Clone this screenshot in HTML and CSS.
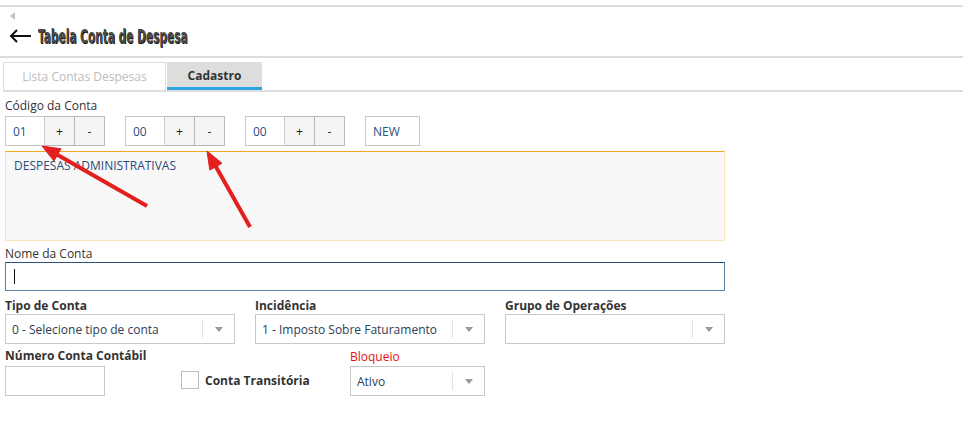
FILE: index.html
```html
<!DOCTYPE html>
<html lang="pt">
<head>
<meta charset="utf-8">
<title>Tabela Conta de Despesa</title>
<link rel="stylesheet" href="styles.css">
</head>
<body>
<div class="page">
  <div class="rule-top"></div>
  <div class="mini"><span class="mini-tri"></span></div>
  <div class="title-row">
    <svg class="back-arrow" width="23" height="14" viewBox="0 0 23 14"><path d="M22 7H2M8 1L2 7L8 13" fill="none" stroke="#111" stroke-width="2"/></svg>
    <h1 class="title">Tabela Conta de Despesa</h1>
  </div>
  <div class="rule-mid"></div>
  <div class="tabs">
    <div class="tab">Lista Contas Despesas</div>
    <div class="tab active">Cadastro</div>
  </div>
  <div class="tabs-line"></div>

  <form class="form">
    <label class="lbl">Código da Conta</label>
    <div class="code-row">
      <div class="code-group"><span class="code-in">01</span><span class="code-btn">+</span><span class="code-btn">-</span></div>
      <div class="code-group"><span class="code-in">00</span><span class="code-btn">+</span><span class="code-btn">-</span></div>
      <div class="code-group"><span class="code-in">00</span><span class="code-btn">+</span><span class="code-btn">-</span></div>
      <span class="code-new">NEW</span>
    </div>
    <div class="desc">DESPESAS ADMINISTRATIVAS</div>

    <label class="lbl lbl-name">Nome da Conta</label>
    <div class="name-in"><span class="caret"></span></div>

    <div class="row3">
      <div class="col col-a">
        <label class="lbl bold">Tipo de Conta</label>
        <div class="sel"><span class="sel-text">0 - Selecione tipo de conta</span><span class="sel-sep"></span><span class="sel-arrow"></span></div>
      </div>
      <div class="col col-a">
        <label class="lbl bold">Incidência</label>
        <div class="sel"><span class="sel-text">1 - Imposto Sobre Faturamento</span><span class="sel-sep"></span><span class="sel-arrow"></span></div>
      </div>
      <div class="col col-b">
        <label class="lbl bold">Grupo de Operações</label>
        <div class="sel"><span class="sel-text"></span><span class="sel-sep"></span><span class="sel-arrow"></span></div>
      </div>
    </div>

    <div class="row4">
      <div class="col col-num">
        <label class="lbl bold nowrap">Número Conta Contábil</label>
        <div class="num-in"></div>
      </div>
      <div class="check">
        <span class="box"></span><span class="check-lbl">Conta Transitória</span>
      </div>
      <div class="col col-blq">
        <label class="lbl red blq-lbl">Bloqueio</label>
        <div class="sel sel-low"><span class="sel-text">Ativo</span><span class="sel-sep"></span><span class="sel-arrow"></span></div>
      </div>
    </div>
  </form>

  <svg class="annot" width="965" height="448" viewBox="0 0 965 448">
    <g fill="#e3201f" stroke="#e3201f">
      <line x1="147" y1="206" x2="56" y2="154" stroke-width="4"/>
      <polygon points="42,146 61,148.8 54,161" stroke-width="1"/>
      <line x1="250" y1="227" x2="215" y2="165" stroke-width="4"/>
      <polygon points="207,151 222,163.3 209.8,170.1" stroke-width="1"/>
    </g>
  </svg>
</div>
</body>
</html>
```

FILE: styles.css
```css
* { box-sizing: border-box; }
html, body { margin: 0; padding: 0; background: #fff; }
body {
  font-family: "Open Sans", "Noto Sans", sans-serif;
  font-size: 12px;
  color: #333;
}
.page { position: relative; width: 965px; height: 448px; overflow: hidden; padding-top: 5px; }
.rule-top { height: 2px; background: #dcdcdc; width: 963px; }
.mini { height: 19px; padding: 5px 0 0 10px; }
.mini-tri {
  display: block; width: 0; height: 0;
  border-top: 4px solid transparent; border-bottom: 4px solid transparent;
  border-right: 5px solid #c4c4c4;
}
.title-row { display: flex; align-items: center; height: 20px; padding-left: 9px; }
.back-arrow { display: block; margin-right: 6px; }
.title {
  margin: 0;
  display: inline-block;
  font-family: "DejaVu Sans Condensed", "Liberation Sans Narrow", sans-serif;
  font-weight: bold;
  font-size: 19px;
  line-height: 20px;
  color: #4e4a46;
  text-shadow: 1px 1px 0 #111;
  transform: scaleX(0.62);
  transform-origin: 0 50%;
  white-space: nowrap;
}
.rule-mid { height: 2px; background: #dcdcdc; width: 963px; margin-top: 10px; }
.tabs { display: flex; padding-left: 3px; margin-top: 4px; height: 28px; }
.tab {
  width: 163px; height: 28px;
  border: 1px solid #ddd; border-bottom: none;
  display: flex; align-items: center; justify-content: center;
  color: #bcbcbc; font-size: 12px;
}
.tab.active {
  width: 95px; margin-left: 1px;
  background: #dddddd; border: none;
  border-bottom: 3px solid #2ba6e0;
  color: #333; font-weight: bold;
  padding-top: 2px;
}
.tabs-line { height: 2px; background: #dedede; margin-left: 3px; width: 960px; }

.form { padding: 6px 0 0 5px; display: flex; flex-direction: column; align-items: flex-start; }
.lbl { display: block; line-height: 16px; height: 16px; color: #333; font-size: 12px; }
.bold { font-weight: bold; }
.red { color: #e81010; }
.nowrap { white-space: nowrap; }

.code-row { display: flex; gap: 20px; margin-top: 2px; }
.code-group { display: flex; }
.code-in, .code-btn, .code-new {
  height: 30px; display: flex; align-items: center;
  border: 1px solid #c8c8c8;
}
.code-in { width: 40px; padding-left: 7px; color: #2b4f80; background: #fff; }
.code-btn {
  width: 30px; justify-content: center; background: #f5f5f5;
  border-color: #b8b8b8; border-left: none; color: #222;
}
.code-new { width: 55px; padding-left: 7px; color: #2b4f80; }

.desc {
  width: 720px; height: 90px; margin-top: 5px;
  background: #f8f8f8;
  border: 1px solid #fbe3bd; border-top: 1px solid #f2a724;
  padding: 6px 8px; color: #2b4b78; font-size: 12px; line-height: 16px;
}
.lbl-name { margin-top: 5px; }
.name-in {
  width: 720px; height: 29px; margin-top: 0;
  border: 1px solid #5a7fa6; border-top-color: #2e4f76;
  display: flex; align-items: center; padding-left: 8px;
}
.caret { display: block; width: 1px; height: 15px; background: #111; }

.row3 { display: flex; gap: 20px; margin-top: 7px; }
.row4 { display: flex; margin-top: 4px; align-items: flex-start; }
.col { display: flex; flex-direction: column; }
.col-a { width: 230px; }
.col-b { width: 220px; }
.col-num { width: 100px; }
.col-blq { width: 135px; }
.blq-lbl { margin-top: 1px; height: 15px; }

.sel {
  height: 30px; width: 100%;
  border: 1px solid #c8c8c8; display: flex; align-items: center;
  background: #fff;
}
.sel-low { margin-top: 2px; }
.sel-text { flex: 1; padding-left: 6px; color: #2c3d55; white-space: nowrap; overflow: hidden; }
.sel-sep { width: 1px; height: 18px; background: #e2e2e2; }
.sel-arrow {
  width: 31px; display: flex; justify-content: center;
}
.sel-arrow::before {
  content: ""; width: 0; height: 0;
  border-left: 4.5px solid transparent; border-right: 4.5px solid transparent;
  border-top: 5px solid #999;
}
.num-in { height: 30px; margin-top: 2px; width: 100px; border: 1px solid #c8c8c8; }

.check { display: flex; align-items: center; margin-left: 76px; margin-top: 23px; width: 169px; }
.box { width: 18px; height: 18px; border: 1px solid #bdbdbd; background: #fff; }
.check-lbl { margin-left: 6px; font-weight: bold; color: #333; }

.annot { position: absolute; left: 0; top: 0; pointer-events: none; }
```
